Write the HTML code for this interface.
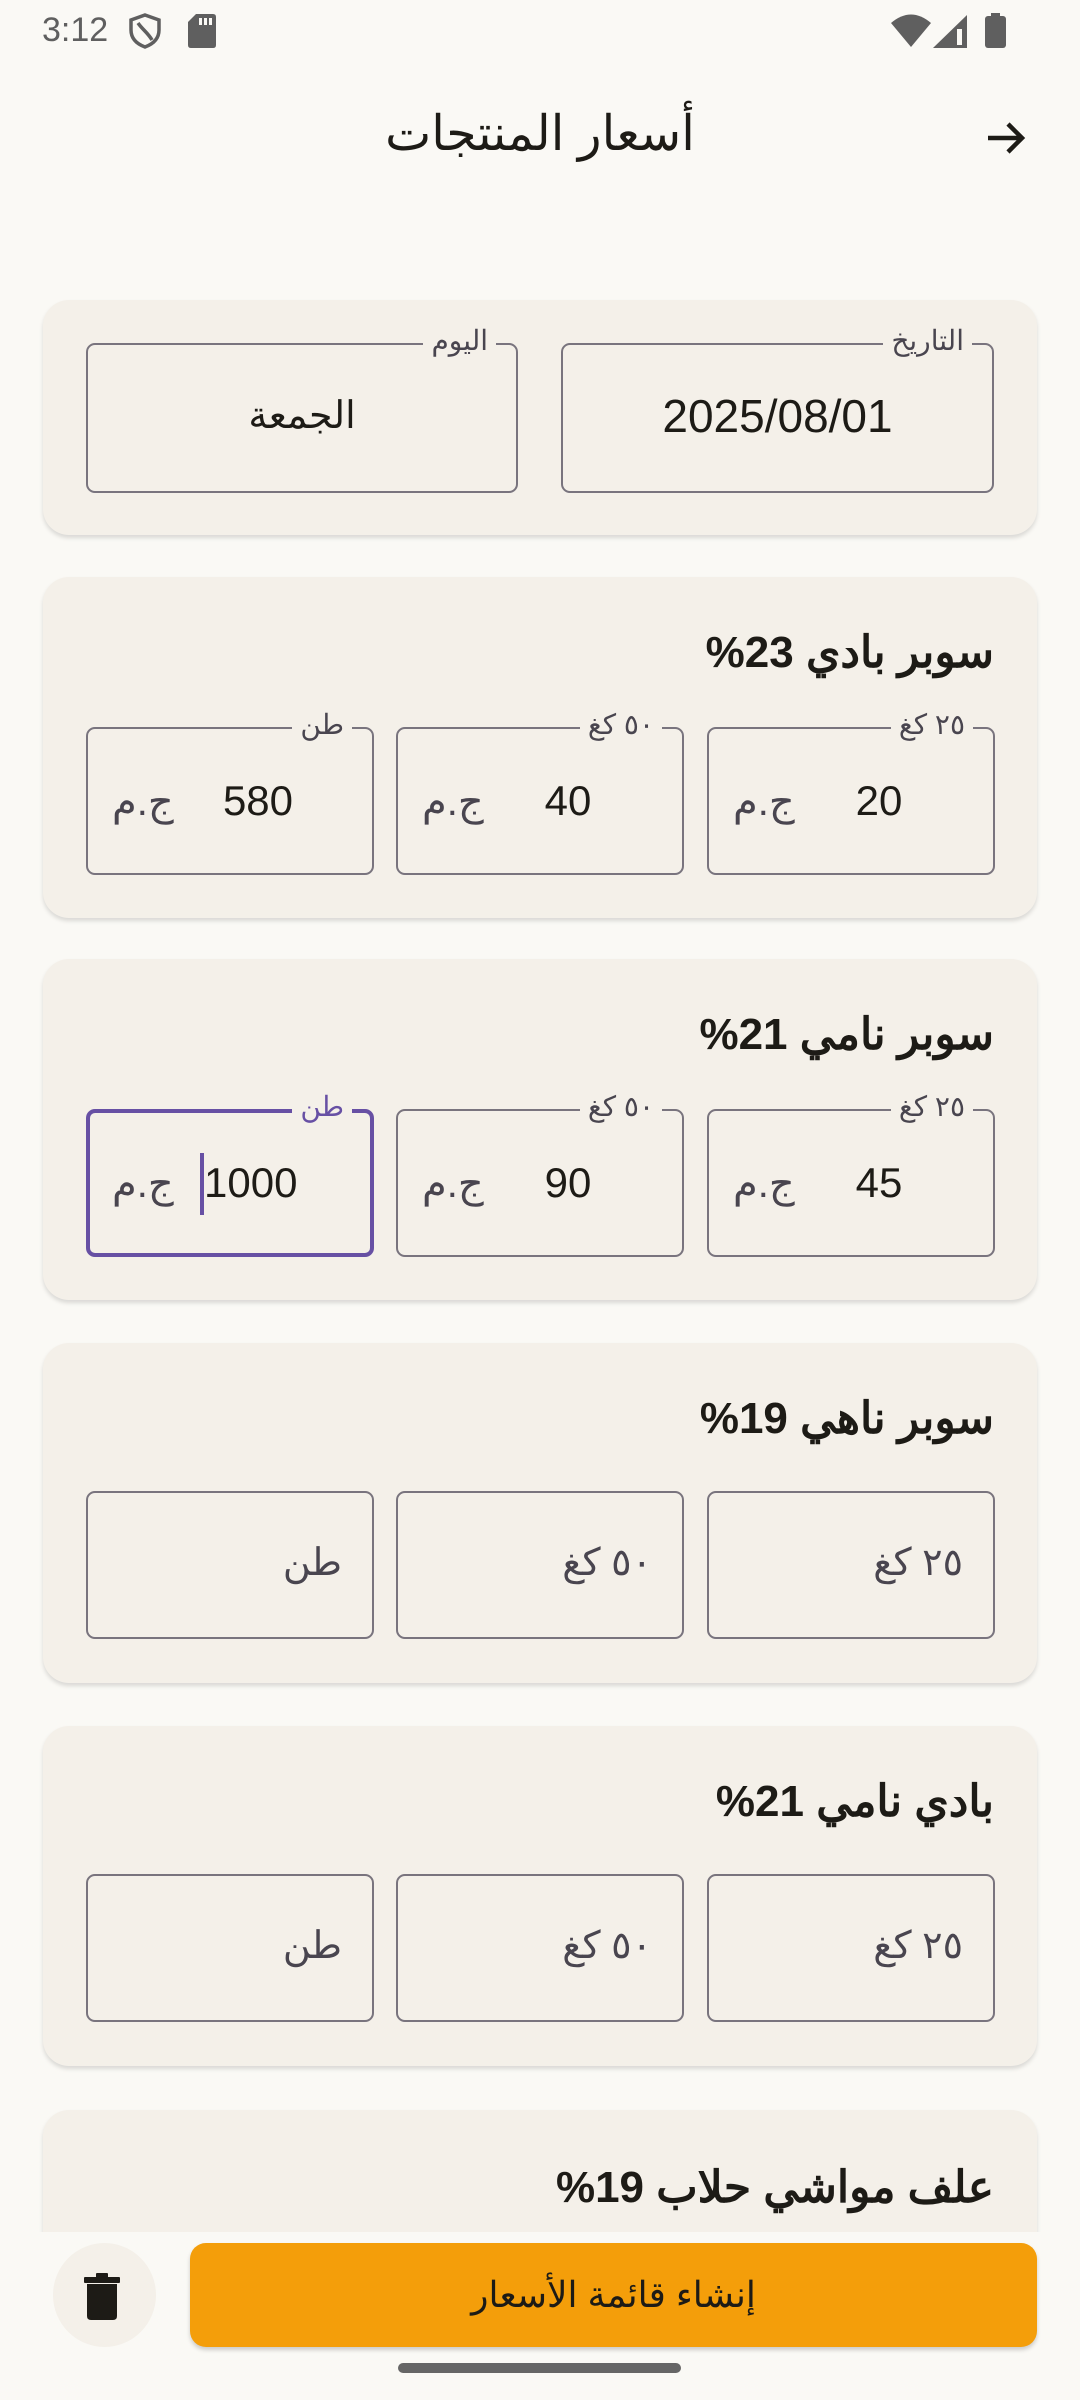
<!DOCTYPE html>
<html><head><meta charset="utf-8">
<style>
*{margin:0;padding:0;box-sizing:border-box}
body{width:1080px;height:2400px;background:#faf9f5;position:relative;overflow:hidden;font-family:"Liberation Sans","Noto Sans CJK SC",sans-serif;color:#1d1b16}
.a{position:absolute}
.card{position:absolute;left:43px;width:994px;background:#f4f0e9;border-radius:26px;box-shadow:0 3px 4px rgba(0,0,0,0.13)}
.f{position:absolute;border:2px solid #79747e;border-radius:9px;height:148px;width:288px}
.lab{position:absolute;top:-20px;right:20px;padding:0 8px;background:#f4f0e9;font-size:28px;color:#49454f;line-height:32px;direction:rtl;white-space:nowrap}
.num{position:absolute;left:100px;width:140px;text-align:center;top:48px;font-size:42px;line-height:48px;color:#1d1b16}
.suf{position:absolute;left:24px;top:46px;font-size:40px;line-height:54px;color:#49454f;direction:rtl}
.ph{position:absolute;right:30px;top:44px;font-size:38px;line-height:52px;color:#49454f;direction:rtl}
.tt{position:absolute;right:43px;top:46px;font-size:44px;font-weight:bold;line-height:60px;direction:rtl;white-space:nowrap}
</style></head><body>
<!-- status bar -->
<div class="a" style="left:42px;top:10px;font-size:34px;color:#5f5f5f;line-height:40px">3:12</div>
<svg class="a" style="left:128px;top:13px" width="34" height="36" viewBox="0 0 34 36"><path d="M17 2 L31 7 V17 C31 26 25 31 17 34 C9 31 3 26 3 17 V7 Z" fill="none" stroke="#5f5f5f" stroke-width="3.5"/><path d="M10 10 C14 16 20 20 24 27" fill="none" stroke="#5f5f5f" stroke-width="3.5"/></svg>
<svg class="a" style="left:188px;top:14px" width="28" height="34" viewBox="0 0 28 34"><path d="M8 0 H25 Q28 0 28 3 V31 Q28 34 25 34 H3 Q0 34 0 31 V8 Z" fill="#5f5f5f"/><rect x="11" y="4" width="3" height="7" fill="#faf9f5"/><rect x="16" y="4" width="3" height="7" fill="#faf9f5"/><rect x="21" y="4" width="3" height="7" fill="#faf9f5"/></svg>
<svg class="a" style="left:891px;top:14px" width="40" height="33" viewBox="0 0 40 33"><path d="M0 9 Q20 -8 40 9 L20 33 Z" fill="#5f5f5f"/></svg>
<svg class="a" style="left:933px;top:15px" width="34" height="33" viewBox="0 0 34 33"><path d="M34 0 V33 H0 Z" fill="#5f5f5f"/><rect x="24" y="14" width="5" height="16" fill="#faf9f5"/></svg>
<svg class="a" style="left:985px;top:13px" width="21" height="35" viewBox="0 0 21 35"><rect x="6" y="0" width="9" height="4" fill="#5f5f5f"/><rect x="0" y="3" width="21" height="32" rx="3" fill="#5f5f5f"/></svg>
<!-- top bar -->
<div class="a" style="left:290px;width:500px;top:102px;text-align:center;font-size:49px;line-height:64px;direction:rtl">أسعار المنتجات</div>
<svg class="a" style="left:982px;top:114px" width="48" height="48" viewBox="0 0 48 48"><path d="M6 24 H40 M26 10 L40 24 L26 38" fill="none" stroke="#1d1b16" stroke-width="4.5"/></svg>

<!-- card 1 -->
<div class="card" style="top:300px;height:235px">
  <div class="f" style="left:518px;top:43px;width:433px;height:150px"><div class="lab">التاريخ</div><div style="position:absolute;left:0;right:0;top:44px;text-align:center;font-size:46px;line-height:54px">2025/08/01</div></div>
  <div class="f" style="left:43px;top:43px;width:432px;height:150px"><div class="lab">اليوم</div><div style="position:absolute;left:0;right:0;top:44px;text-align:center;font-size:38px;line-height:54px;direction:rtl">الجمعة</div></div>
</div>

<!-- card 2 -->
<div class="card" style="top:577px;height:341px">
  <div class="tt">سوبر بادي 23%</div>
  <div class="f" style="left:664px;top:150px"><div class="lab">٢٥ كغ</div><div class="suf">ج.م</div><div class="num">20</div></div>
  <div class="f" style="left:353px;top:150px"><div class="lab">٥٠ كغ</div><div class="suf">ج.م</div><div class="num">40</div></div>
  <div class="f" style="left:43px;top:150px"><div class="lab">طن</div><div class="suf">ج.م</div><div class="num">580</div></div>
</div>

<!-- card 3 -->
<div class="card" style="top:959px;height:341px">
  <div class="tt">سوبر نامي 21%</div>
  <div class="f" style="left:664px;top:150px"><div class="lab">٢٥ كغ</div><div class="suf">ج.م</div><div class="num">45</div></div>
  <div class="f" style="left:353px;top:150px"><div class="lab">٥٠ كغ</div><div class="suf">ج.م</div><div class="num">90</div></div>
  <div class="f" style="left:43px;top:150px;border:4px solid #6750a4"><div class="lab" style="color:#6750a4;top:-22px;right:18px">طن</div><div class="suf" style="left:22px;top:44px">ج.م</div><div style="position:absolute;left:110px;top:40px;width:4px;height:62px;background:#6750a4"></div><div class="num" style="left:114px;width:auto;top:46px">1000</div></div>
</div>

<!-- card 4 -->
<div class="card" style="top:1343px;height:340px">
  <div class="tt">سوبر ناهي 19%</div>
  <div class="f" style="left:664px;top:148px"><div class="ph">٢٥ كغ</div></div>
  <div class="f" style="left:353px;top:148px"><div class="ph">٥٠ كغ</div></div>
  <div class="f" style="left:43px;top:148px"><div class="ph">طن</div></div>
</div>

<!-- card 5 -->
<div class="card" style="top:1726px;height:340px">
  <div class="tt">بادي نامي 21%</div>
  <div class="f" style="left:664px;top:148px"><div class="ph">٢٥ كغ</div></div>
  <div class="f" style="left:353px;top:148px"><div class="ph">٥٠ كغ</div></div>
  <div class="f" style="left:43px;top:148px"><div class="ph">طن</div></div>
</div>

<!-- card 6 (cut) -->
<div class="card" style="top:2110px;height:200px"><div class="tt" style="top:48px">علف مواشي حلاب 19%</div></div>
<div class="a" style="left:0;top:2232px;width:1080px;height:168px;background:#faf9f5"></div>

<!-- bottom -->
<div class="a" style="left:53px;top:2243px;width:103px;height:104px;border-radius:50%;background:#f4f0e9"></div>
<svg class="a" style="left:84px;top:2271px" width="40" height="50" viewBox="0 0 40 50"><rect x="0" y="6" width="36" height="6" rx="1" fill="#1d1b16"/><rect x="12" y="2" width="12" height="6" rx="1" fill="#1d1b16"/><path d="M3 13 H33 V45 Q33 49 29 49 H7 Q3 49 3 45 Z" fill="#1d1b16"/></svg>
<div class="a" style="left:190px;top:2243px;width:847px;height:104px;background:#f49e0a;border-radius:16px;box-shadow:0 3px 4px rgba(0,0,0,0.18)"></div>
<div class="a" style="left:190px;top:2267px;width:847px;text-align:center;font-size:36px;line-height:56px;direction:rtl;color:#1d1b16">إنشاء قائمة الأسعار</div>
<div class="a" style="left:398px;top:2363px;width:283px;height:10px;border-radius:5px;background:#666"></div>
</body></html>
